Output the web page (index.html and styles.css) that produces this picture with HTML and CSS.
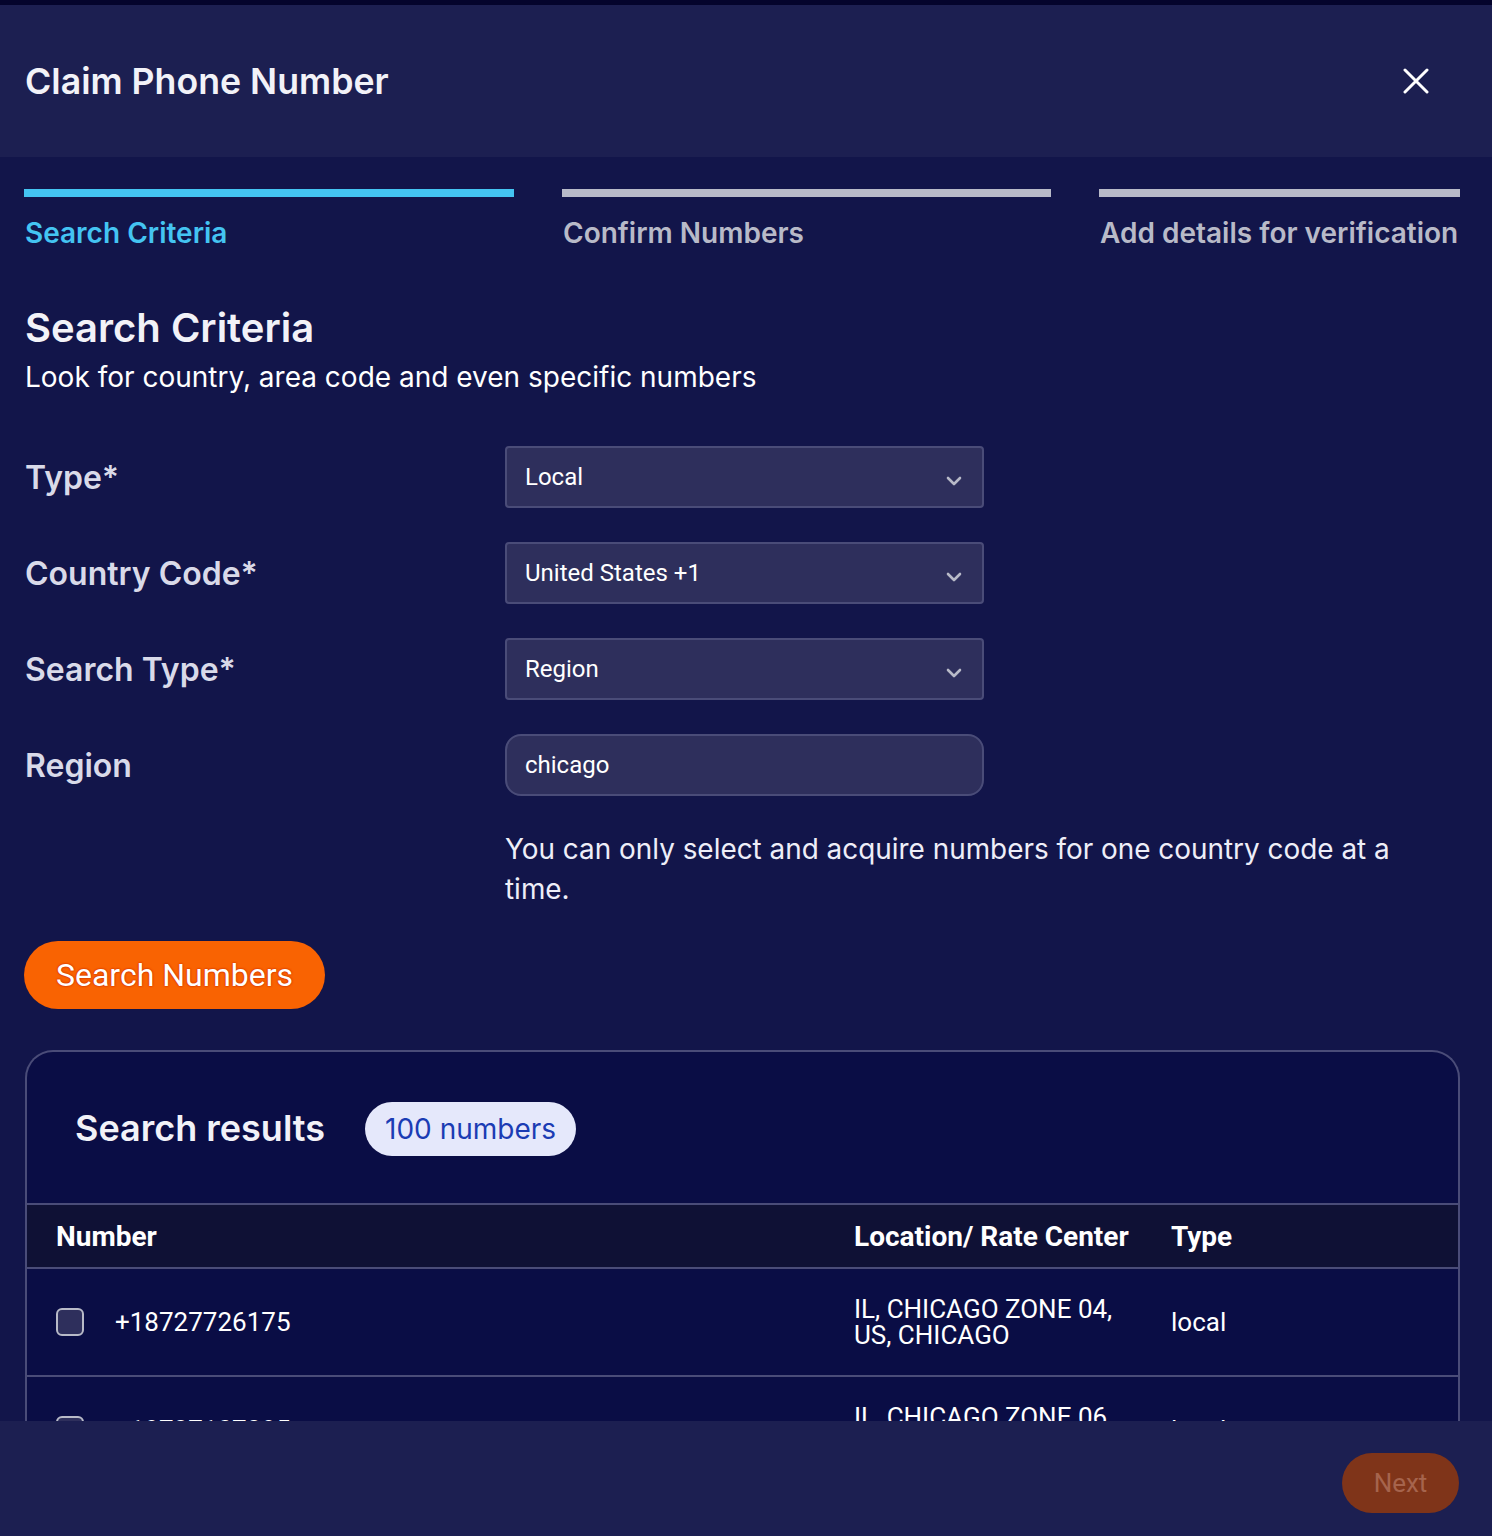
FILE: index.html
```html
<!DOCTYPE html>
<html lang="en">
<head>
<meta charset="utf-8">
<title>Claim Phone Number</title>
<link rel="stylesheet" href="styles.css">
</head>
<body>
<div class="topstrip"></div>
<div class="modal">
  <header class="modal-header">
    <h1 class="modal-title">Claim Phone Number</h1>
    <button class="close-btn" aria-label="Close">
      <svg width="26" height="26" viewBox="0 0 26 26"><path d="M2 2 L24 24 M24 2 L2 24" stroke="#ffffff" stroke-width="3" stroke-linecap="round" fill="none"/></svg>
    </button>
  </header>

  <main class="modal-body">
    <div class="steps">
      <div class="step active"><div class="step-bar"></div><div class="step-label">Search Criteria</div></div>
      <div class="step"><div class="step-bar"></div><div class="step-label">Confirm Numbers</div></div>
      <div class="step"><div class="step-bar"></div><div class="step-label">Add details for verification</div></div>
    </div>

    <section class="intro">
      <h2 class="intro-title">Search Criteria</h2>
      <p class="intro-sub">Look for country, area code and even specific numbers</p>
    </section>

    <div class="form">
      <label class="form-label">Type*</label>
      <div class="select"><span>Local</span><svg class="chev" width="16" height="10" viewBox="0 0 16 10"><path d="M2 2 L8 8 L14 2" stroke="#b8bac8" stroke-width="2.6" fill="none" stroke-linecap="round" stroke-linejoin="round"/></svg></div>

      <label class="form-label">Country Code*</label>
      <div class="select"><span>United States +1</span><svg class="chev" width="16" height="10" viewBox="0 0 16 10"><path d="M2 2 L8 8 L14 2" stroke="#b8bac8" stroke-width="2.6" fill="none" stroke-linecap="round" stroke-linejoin="round"/></svg></div>

      <label class="form-label">Search Type*</label>
      <div class="select"><span>Region</span><svg class="chev" width="16" height="10" viewBox="0 0 16 10"><path d="M2 2 L8 8 L14 2" stroke="#b8bac8" stroke-width="2.6" fill="none" stroke-linecap="round" stroke-linejoin="round"/></svg></div>

      <label class="form-label">Region</label>
      <div class="input"><span>chicago</span></div>

      <div></div>
      <p class="note">You can only select and acquire numbers for one country code at a time.</p>
    </div>

    <button class="search-btn">Search Numbers</button>

    <section class="results">
      <div class="results-head">
        <h3 class="results-title">Search results</h3>
        <span class="badge">100 numbers</span>
      </div>
      <div class="table">
        <div class="trow thead">
          <div class="cell">Number</div>
          <div class="cell">Location/ Rate Center</div>
          <div class="cell">Type</div>
        </div>
        <div class="trow">
          <div class="cell num"><span class="checkbox"></span>+18727726175</div>
          <div class="cell loc">IL, CHICAGO ZONE 04,<br>US, CHICAGO</div>
          <div class="cell">local</div>
        </div>
        <div class="trow">
          <div class="cell num"><span class="checkbox"></span>+18727107285</div>
          <div class="cell loc">IL, CHICAGO ZONE 06,<br>US, CHICAGO</div>
          <div class="cell">local</div>
        </div>
      </div>
    </section>
  </main>

  <footer class="modal-footer">
    <button class="next-btn">Next</button>
  </footer>
</div>
</body>
</html>
```

FILE: styles.css
```css
* { box-sizing: border-box; }
html, body { margin: 0; padding: 0; }
body {
  background: #12154a;
  font-family: Inter, "Noto Sans", sans-serif;
  color: #ffffff;
  width: 1492px;
  height: 1536px;
  overflow: hidden;
}
.topstrip { height: 5px; background: #04042c; }
.modal { display: flex; flex-direction: column; height: 1531px; }

.modal-header {
  height: 152px;
  flex: 0 0 152px;
  background: #1c1f51;
  display: flex;
  align-items: center;
  justify-content: space-between;
  padding: 0 63px 0 25px;
}
.modal-title {
  margin: 0;
  font-size: 35.7px;
  font-weight: 600;
  color: #f2f2f8;
}
.close-btn {
  background: none;
  border: 0;
  padding: 0;
  width: 26px;
  height: 26px;
  display: flex;
}

.modal-body {
  flex: 1;
  overflow: hidden;
  background: #12154a;
  padding: 32px 32px 0 24px;
}

.steps {
  display: grid;
  grid-template-columns: 490px 489px 361px;
  column-gap: 48px;
}
.step-bar { height: 8px; background: #b8bac8; }
.step.active .step-bar { background: #44c4f2; }
.step-label {
  margin-top: 19px;
  font-size: 28px;
  font-weight: 600;
  line-height: 34px;
  color: #b8bac8;
  padding-left: 1px;
}
.step.active .step-label { color: #44c4f2; }

.intro { margin-top: 54px; padding-left: 1px; }
.intro-title {
  margin: 0;
  font-size: 40px;
  font-weight: 600;
  line-height: 48px;
  color: #f2f2f8;
}
.intro-sub {
  margin: 8px 0 0;
  font-size: 28px;
  line-height: 34px;
  color: #ffffff;
}

.form {
  margin-top: 52px;
  display: grid;
  grid-template-columns: 481px 479px;
  row-gap: 34px;
  align-items: center;
}
.form-label {
  font-size: 32px;
  font-weight: 600;
  color: #d9dae9;
  padding-left: 1px;
}
.select, .input {
  height: 62px;
  background: #2e2f5c;
  border: 2px solid #4a4c78;
  border-radius: 4px;
  display: flex;
  align-items: center;
  justify-content: space-between;
  padding: 0 20px 0 18px;
  font-family: Roboto, "Liberation Sans", sans-serif;
  font-size: 24px;
  color: #ffffff;
}
.chev { margin-top: 8px; }
.input { border-radius: 16px; }
.note {
  grid-column: 2 / span 1;
  width: 910px;
  margin: -1px 0 0;
  font-size: 27.9px;
  line-height: 40px;
  color: #eeeef8;
}

.search-btn {
  margin-top: 32px;
  display: block;
  height: 68px;
  width: 301px;
  border: 0;
  border-radius: 34px;
  background: #f96302;
  color: #ffffff;
  font-family: Roboto, "Liberation Sans", sans-serif;
  font-size: 32px;
  text-shadow: 0 0 2px #d03000, 0 0 2px #d03000;
  padding: 0;
}

.results {
  margin-top: 41px;
  margin-left: 1px;
  width: 1435px;
  background: #0a0d45;
  border: 2px solid #4a4c78;
  border-bottom: 0;
  border-radius: 28px 28px 0 0;
}
.results-head {
  height: 151px;
  display: flex;
  align-items: center;
  padding: 0 0 0 48px;
  gap: 40px;
}
.results-title {
  margin: 0;
  font-size: 36px;
  font-weight: 600;
  color: #f2f2f8;
}
.badge {
  display: inline-flex;
  align-items: center;
  height: 54px;
  padding: 0 20px;
  border-radius: 27px;
  background: #e5e8fb;
  color: #1b3cb4;
  font-size: 28px;
  font-weight: 400;
  margin-top: 3px;
}

.table { font-family: Roboto, "Liberation Sans", sans-serif; }
.trow {
  display: grid;
  grid-template-columns: 798px 317px 1fr;
  align-items: center;
  border-top: 2px solid #4a4c78;
  padding-left: 29px;
  min-height: 108px;
  font-size: 26px;
  line-height: 27px;
  color: #ffffff;
}
.cell.loc { line-height: 26px; }
.trow.thead {
  min-height: 64px;
  background: #0f1135;
  font-weight: 700;
  font-size: 28px;
}
.cell.num { display: flex; align-items: center; gap: 31px; }
.checkbox {
  width: 28px;
  height: 28px;
  border: 2px solid #b8bac8;
  border-radius: 6px;
  background: #2e2f5c;
  flex: 0 0 28px;
}

.modal-footer {
  height: 115px;
  flex: 0 0 115px;
  background: #1c1f51;
  display: flex;
  justify-content: flex-end;
  align-items: flex-start;
  padding: 32px 33px 0 0;
}
.next-btn {
  height: 60px;
  width: 117px;
  border: 0;
  border-radius: 30px;
  background: #7f3419;
  color: #a6644d;
  font-family: Roboto, "Liberation Sans", sans-serif;
  font-size: 26px;
  padding: 0;
}
```
